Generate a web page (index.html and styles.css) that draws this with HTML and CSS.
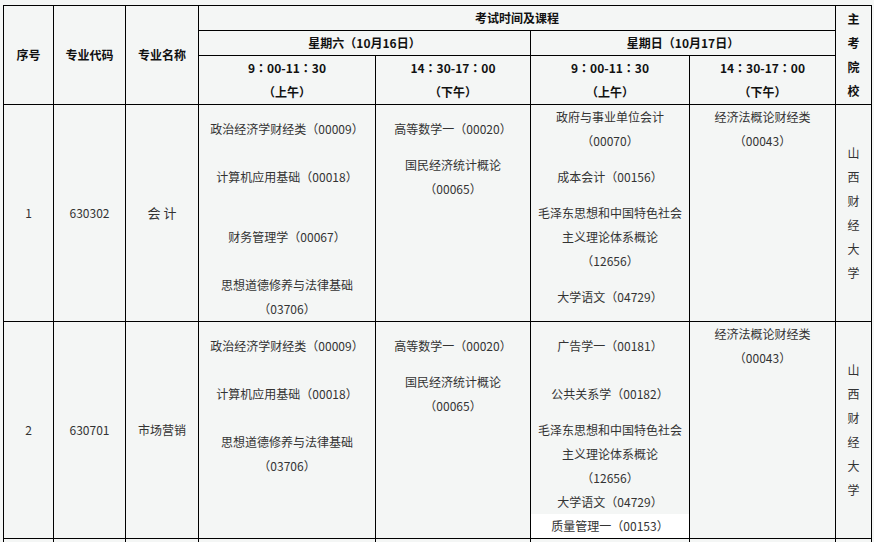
FILE: index.html
```html
<!DOCTYPE html>
<html lang="zh-CN">
<head>
<meta charset="utf-8">
<title>考试时间及课程</title>
<link rel="stylesheet" href="styles.css">
</head>
<body>
<table class="sched">
  <colgroup>
    <col class="c-no"><col class="c-code"><col class="c-name"><col class="c-a"><col class="c-b"><col class="c-c"><col class="c-d"><col class="c-sch">
  </colgroup>
  <thead>
    <tr class="h1">
      <th rowspan="3">序号</th>
      <th rowspan="3">专业代码</th>
      <th rowspan="3">专业名称</th>
      <th colspan="4">考试时间及课程</th>
      <th rowspan="3">主<br>考<br>院<br>校</th>
    </tr>
    <tr class="h2">
      <th colspan="2">星期六（10月16日）</th>
      <th colspan="2">星期日（10月17日）</th>
    </tr>
    <tr class="h3">
      <th><span class="clock" lang="zh-TW">9：00-11：30</span><br>（上午）</th>
      <th><span class="clock" lang="zh-TW">14：30-17：00</span><br>（下午）</th>
      <th><span class="clock" lang="zh-TW">9：00-11：30</span><br>（上午）</th>
      <th><span class="clock" lang="zh-TW">14：30-17：00</span><br>（下午）</th>
    </tr>
  </thead>
  <tbody>
    <tr class="row">
      <td class="mid">1</td>
      <td class="mid">630302</td>
      <td class="mid name">会 计</td>
      <td class="top">
        <div class="ln m12">政治经济学财经类（00009）</div>
        <div class="ln m24">计算机应用基础（00018）</div>
        <div class="ln m36">财务管理学（00067）</div>
        <div class="ln m24">思想道德修养与法律基础</div>
        <div class="ln">（03706）</div>
      </td>
      <td class="top">
        <div class="ln m12">高等数学一（00020）</div>
        <div class="ln m12">国民经济统计概论</div>
        <div class="ln">（00065）</div>
      </td>
      <td class="top">
        <div class="ln">政府与事业单位会计</div>
        <div class="ln">（00070）</div>
        <div class="ln m12">成本会计（00156）</div>
        <div class="ln m12">毛泽东思想和中国特色社会</div>
        <div class="ln">主义理论体系概论</div>
        <div class="ln">（12656）</div>
        <div class="ln m12">大学语文（04729）</div>
      </td>
      <td class="top">
        <div class="ln">经济法概论财经类</div>
        <div class="ln">（00043）</div>
      </td>
      <td class="mid">山<br>西<br>财<br>经<br>大<br>学</td>
    </tr>
    <tr class="row">
      <td class="mid">2</td>
      <td class="mid">630701</td>
      <td class="mid">市场营销</td>
      <td class="top">
        <div class="ln m12">政治经济学财经类（00009）</div>
        <div class="ln m24">计算机应用基础（00018）</div>
        <div class="ln m24">思想道德修养与法律基础</div>
        <div class="ln">（03706）</div>
      </td>
      <td class="top">
        <div class="ln m12">高等数学一（00020）</div>
        <div class="ln m12">国民经济统计概论</div>
        <div class="ln">（00065）</div>
      </td>
      <td class="top">
        <div class="ln m12">广告学一（00181）</div>
        <div class="ln m24">公共关系学（00182）</div>
        <div class="ln m12">毛泽东思想和中国特色社会</div>
        <div class="ln">主义理论体系概论</div>
        <div class="ln">（12656）</div>
        <div class="ln">大学语文（04729）</div>
        <div class="ln hl">质量管理一（00153）</div>
      </td>
      <td class="top">
        <div class="ln">经济法概论财经类</div>
        <div class="ln">（00043）</div>
      </td>
      <td class="mid">山<br>西<br>财<br>经<br>大<br>学</td>
    </tr>
    <tr class="row">
      <td class="mid"></td><td class="mid"></td><td class="mid"></td><td class="top"></td><td class="top"></td><td class="top"></td><td class="top"></td><td class="mid"></td>
    </tr>
  </tbody>
</table>
</body>
</html>
```

FILE: styles.css
```css
html, body {
  background: #f4f6f5;
}
body {
  margin: 0;
  padding: 5px 0 0 3px;
  font-family: "Noto Sans CJK SC", "Noto Sans", sans-serif;
  font-size: 12px;
  color: #333;
}
.sched {
  border-collapse: collapse;
  table-layout: fixed;
  width: 869px;
}
.c-no { width: 50px; }
.c-code { width: 72px; }
.c-name { width: 73px; }
.c-a { width: 177px; }
.c-b { width: 155px; }
.c-c { width: 159px; }
.c-d { width: 146px; }
.c-sch { width: 36px; }
.sched th, .sched td {
  border: 1px solid #000;
  padding: 0;
  text-align: center;
  line-height: 24px;
  white-space: nowrap;
}
.sched th {
  font-weight: bold;
  color: #111;
  vertical-align: middle;
}
.clock {
  font-family: "Noto Sans CJK TC", "Noto Sans CJK SC", sans-serif;
}
.row {
  height: 217px;
}
.mid {
  vertical-align: middle;
}
.top {
  vertical-align: top;
}
.ln {
  line-height: 24px;
}
.m12 { margin-top: 12px; }
.m24 { margin-top: 24px; }
.m36 { margin-top: 36px; }
.hl {
  background: #ffffff;
}
.name {
  font-size: 13px;
}
```
